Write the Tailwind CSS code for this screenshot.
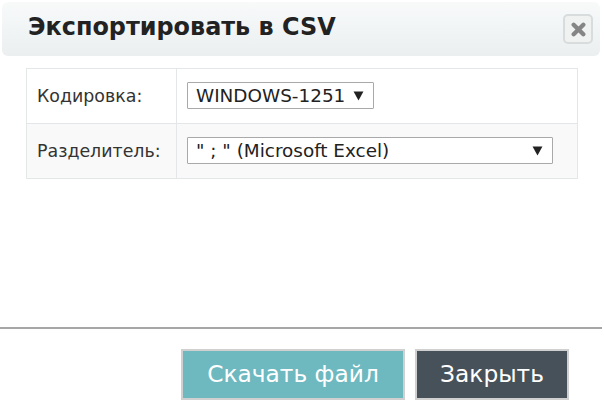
<!DOCTYPE html>
<html lang="ru">
<head>
<meta charset="utf-8">
<script src="https://cdn.jsdelivr.net/npm/@tailwindcss/browser@4"></script>
</head>
<body class="bg-white w-[604px] h-[416px] overflow-hidden font-['DejaVu_Sans',sans-serif]">
<div class="pt-[2px] px-[2px] w-[602px]">
  <header class="h-[54px] rounded-[6px] bg-gradient-to-b from-[#f8fafa] to-[#ebeff0] flex items-center justify-between pl-[26px] pr-[7px]">
    <h1 class="text-[23.9px] font-bold text-[#222222] leading-none relative top-[-1px]">Экспортировать в CSV</h1>
    <button class="w-[30px] h-[30px] rounded-[5px] border-2 border-[#d9dcdc] bg-[#f0f1f1] flex items-center justify-center">
      <svg width="15" height="15" viewBox="0 0 14 14"><path d="M2.5 2.5 L11.5 11.5 M11.5 2.5 L2.5 11.5" stroke="#858585" stroke-width="4" stroke-linecap="round"/></svg>
    </button>
  </header>
</div>
<div class="ml-[26px] mt-[12px] w-[552px] border border-[#e3e7e7] text-[17.4px] text-[#333333]">
  <div class="flex h-[55px] bg-white border-b border-[#e3e7e7]">
    <div class="w-[150px] border-r border-[#e3e7e7] flex items-center pl-[10px]">Кодировка:</div>
    <div class="flex items-center pl-[10px] pb-[1px]">
      <div class="w-[187px] h-[27px] border border-[#a9a9a9] rounded-[1px] bg-white flex items-center justify-between pl-[8px] pr-[9px] text-[#222222] text-[18.4px]">
        <span>WINDOWS-1251</span>
        <svg width="11" height="10" viewBox="0 0 10 9"><path d="M0.5 0.5 H9.5 L5 8.5 Z" fill="#222222"/></svg>
      </div>
    </div>
  </div>
  <div class="flex h-[54px] bg-[#f9f9f9]">
    <div class="w-[150px] border-r border-[#e3e7e7] flex items-center pl-[10px]">Разделитель:</div>
    <div class="flex items-center pl-[10px] pb-[1px]">
      <div class="w-[366px] h-[27px] border border-[#a9a9a9] rounded-[1px] bg-white flex items-center justify-between pl-[8px] pr-[9px] text-[#222222] text-[18.4px]">
        <span>" ; " (Microsoft Excel)</span>
        <svg width="11" height="10" viewBox="0 0 10 9"><path d="M0.5 0.5 H9.5 L5 8.5 Z" fill="#222222"/></svg>
      </div>
    </div>
  </div>
</div>
<div class="mt-[148px] h-[2px] w-[602px] bg-[#a6a6a6]"></div>
<div class="mt-[20px] flex gap-[10px] pl-[181px]">
  <button class="w-[224px] h-[51px] border-2 border-[#d0d0d0] bg-[#6db9bf] text-white text-[23.3px]">Скачать файл</button>
  <button class="w-[154px] h-[51px] border-2 border-[#d0d0d0] bg-[#47515a] text-white text-[23.3px]">Закрыть</button>
</div>
</body>
</html>
